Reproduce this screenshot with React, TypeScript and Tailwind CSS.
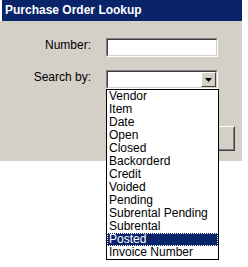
import React from 'react';

const options = [
  'Vendor',
  'Item',
  'Date',
  'Open',
  'Closed',
  'Backorderd',
  'Credit',
  'Voided',
  'Pending',
  'Subrental Pending',
  'Subrental',
  'Posted',
  'Invoice Number',
];

// classic win2k sunken edit border
const Sunken: React.FC<{ children?: React.ReactNode }> = ({ children }) => (
  <div className="w-[112px] h-[19px] border border-t-[#808080] border-l-[#808080] border-r-white border-b-white">
    <div className="w-full h-full border border-t-[#404040] border-l-[#404040] border-r-[#d4d0c8] border-b-[#d4d0c8] bg-white relative">
      {children}
    </div>
  </div>
);

export default function App() {
  return (
    <div
      className="w-[248px] h-[267px] bg-white relative overflow-hidden"
      style={{ fontFamily: "'Liberation Sans', Arial, sans-serif" }}
    >
      <div className="w-[242px]">
        {/* Title */}
        <div className="h-[21px] ml-[2px] bg-[#0a246a] text-white font-bold text-[12px] leading-[21px] pl-[3px]">
          Purchase Order Lookup
        </div>

        {/* Body */}
        <div className="h-[140px] bg-[#d4d0c8] pt-[17px]">
          <div className="flex items-center h-[19px]">
            <div className="w-[91px] text-right text-[12px] text-black leading-none -mt-[5px]">Number:</div>
            <div className="ml-[15px]">
              <Sunken />
            </div>
          </div>
          <div className="flex items-center h-[19px] mt-[13px]">
            <div className="w-[91px] text-right text-[12px] text-black leading-none -mt-[5px]">Search by:</div>
            <div className="ml-[15px]">
              <Sunken>
                <div className="absolute right-0 top-0 w-[15px] h-[15px] bg-[#d4d0c8] border border-t-white border-l-white border-r-[#404040] border-b-[#404040] flex items-center justify-center">
                  <svg width="7" height="4" viewBox="0 0 7 4">
                    <path d="M0 0h7L3.5 4z" fill="#000" />
                  </svg>
                </div>
              </Sunken>
            </div>
          </div>
          <div className="flex justify-end mt-[37px] pr-[7px]">
            <div className="w-[75px] h-[25px] border border-t-white border-l-white border-r-[#404040] border-b-[#404040]">
              <div className="w-full h-full border border-t-[#d4d0c8] border-l-[#d4d0c8] border-r-[#808080] border-b-[#808080]" />
            </div>
          </div>
        </div>
      </div>

      {/* Open dropdown list */}
      <div
        className="absolute left-[106px] top-[89px] w-[113px] h-[171px] bg-white border border-black"
        style={{ fontFamily: "'Liberation Sans Narrow', 'Liberation Sans', Arial, sans-serif" }}
      >
        {options.map((o) => (
          <div
            key={o}
            className={
              o === 'Posted'
                ? 'h-[13px] leading-[13px] text-[12px] pl-[2px] bg-[#0a246a] text-white outline outline-1 outline-dotted outline-white -outline-offset-1'
                : 'h-[13px] leading-[13px] text-[12px] pl-[2px] text-black'
            }
          >
            {o}
          </div>
        ))}
      </div>
    </div>
  );
}
